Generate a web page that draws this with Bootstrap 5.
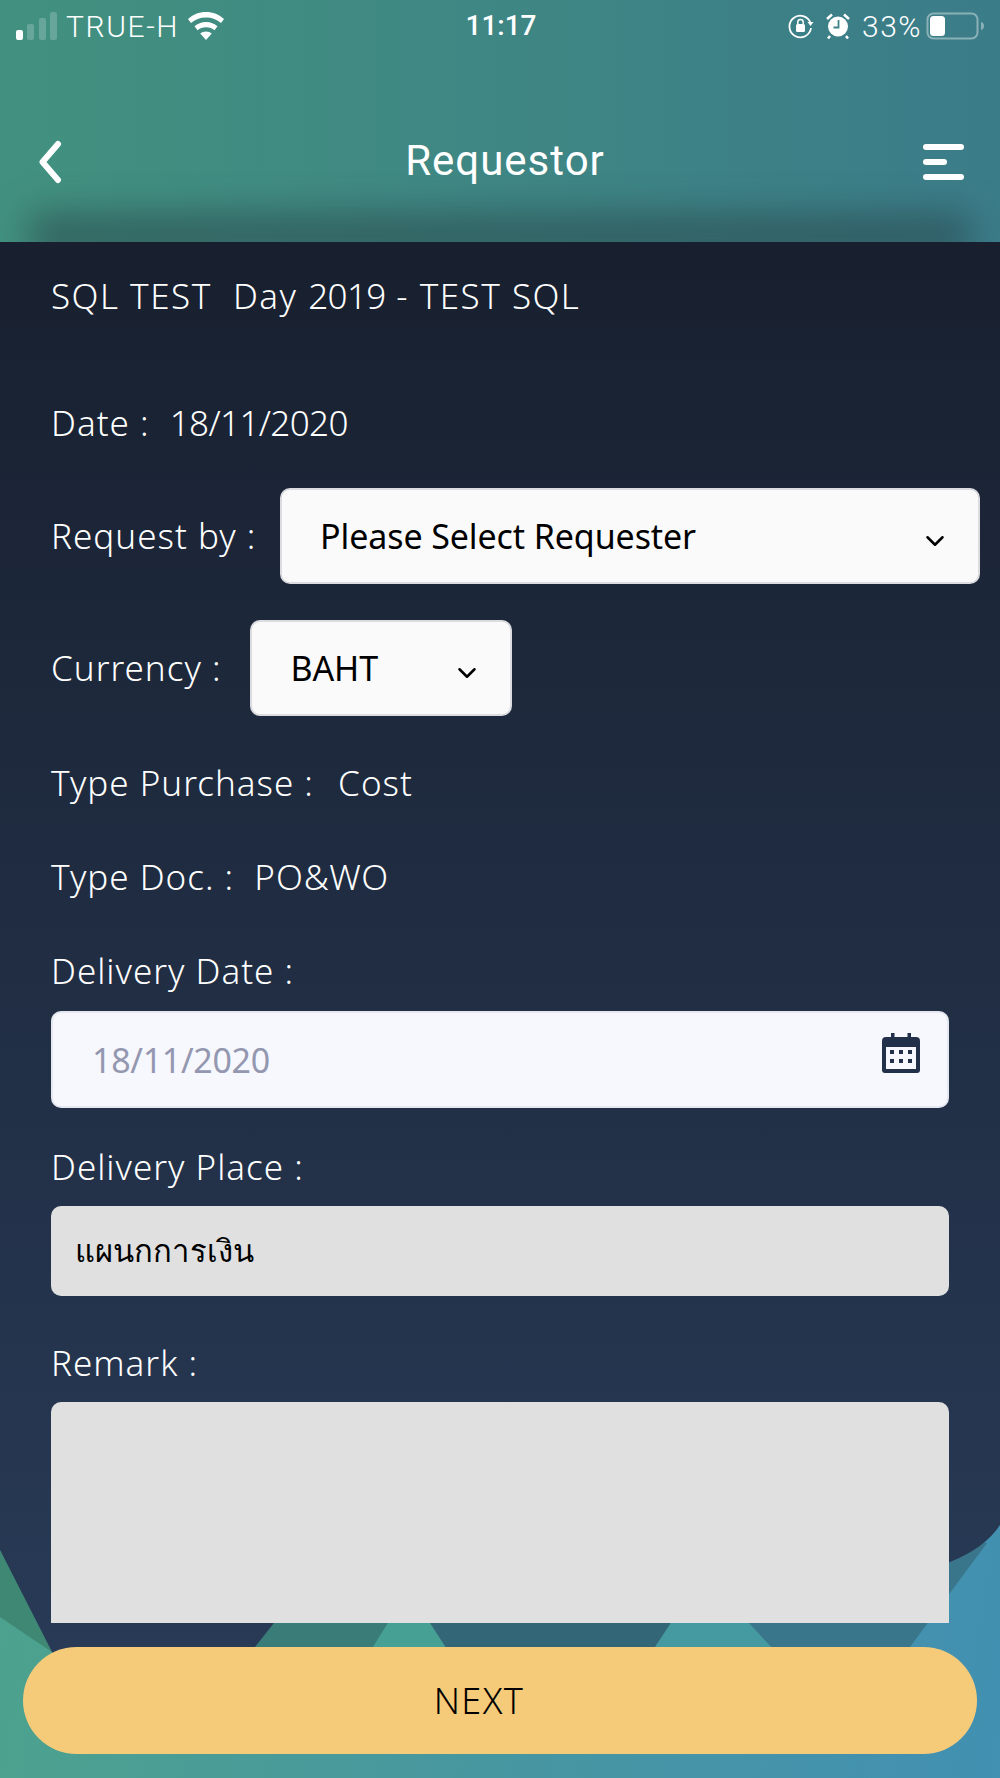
<!DOCTYPE html>
<html lang="en">
<head>
    <meta charset="UTF-8">
    <title>Requestor</title>
    <link href="https://cdn.jsdelivr.net/npm/bootstrap@5.3.0/dist/css/bootstrap.min.css" rel="stylesheet">
    <style>
      body { font-family: "Noto Sans", "Open Sans", sans-serif; background: #283a56; }
      .app-shell { position: relative; width: 1000px; height: 1778px; overflow: hidden; background: linear-gradient(100deg, #4fa883 0%, #4797a0 60%, #4290b2 100%); color: #fff; }
      .bg-shapes { position: absolute; left: 0; top: 0; width: 1000px; height: 1778px; }
      .top-head { position: relative; height: 242px; overflow: hidden; background: linear-gradient(90deg, #42917f 0%, #3b7c89 100%); }
      .top-head::after { content: ""; position: absolute; left: 30px; right: 30px; bottom: -16px; height: 44px; background: rgba(40,70,75,.62); filter: blur(18px); }
      .status-row { height: 52px; padding: 0 14px 0 16px; font-size: 30px; font-family: Roboto, sans-serif; font-weight: 300; }
      .status-left, .status-right { width: 380px; }
      .carrier-name { letter-spacing: 1.6px; }
      .batt-pct { letter-spacing: 1.5px; margin-left: 12px; }
      .alarm-mark { margin-left: 12px; }
      .status-time { font-weight: 500; font-size: 28px; }
      .title-row { height: 108px; padding: 0 36px 0 38px; margin-top: 54px; }
      .title-end-left { width: 200px; padding-top: 3px; }
      .title-end-right { width: 192px; padding-top: 3px; }
      .head-title { font-family: Roboto, sans-serif; font-size: 42px; letter-spacing: 1px; }
      .form-scroll { position: relative; height: 1381px; overflow: hidden; padding: 0 51px; font-size: 35px; letter-spacing: 1px; font-weight: 300; }
      .line-row { line-height: 44px; }
      .event-line { margin-top: 32px; letter-spacing: 1.5px; }
      .date-line { margin-top: 83px; margin-bottom: 43px; }
      .num-run { letter-spacing: -.6px; }
      .pick-line-first { margin-bottom: 36px; }
      .gap-type { margin-top: 50px; }
      .gap-first { margin-top: 45px; }
      .gap-label { margin-bottom: 17px; }
      .gap-label-date { margin-bottom: 18px; }
      .gap-place { margin-top: 37px; }
      .gap-remark { margin-top: 45px; }
      .pick-box.form-select { height: 96px; font-size: 34px; letter-spacing: -.1px; color: #000; font-weight: 400; background-color: #fafafa; border: 2px solid #dcdce0; border-radius: 10px; padding: 0 60px 0 38px; background-size: 26px 20px; background-position: right 30px top 41px; background-image: url("data:image/svg+xml,%3csvg xmlns='http://www.w3.org/2000/svg' viewBox='0 0 16 16'%3e%3cpath fill='none' stroke='%23000' stroke-linecap='round' stroke-linejoin='round' stroke-width='2' d='m2 5 6 6 6-6'/%3e%3c/svg%3e"); }
      .pick-requester { width: 700px; margin-left: auto; margin-right: -31px; flex: none; }
      .pick-currency { width: 262px; margin-left: 29px; }
      .field-box.form-control { border-radius: 10px; }
      .date-box.form-control { height: 97px; font-size: 34px; letter-spacing: -.3px; background: #f7f8fd; border: 2px solid #e6e8f1; padding-left: 39px; color: #9497b0; }
      .cal-mark { position: absolute; right: 29px; top: 21px; }
      .place-box.form-control { height: 90px; background: #e0e0e0; border: 0; padding-left: 24px; color: #000; font-size: 31px; letter-spacing: .1px; font-family: "Noto Sans", "DejaVu Sans", sans-serif; opacity: 1; }
      .note-box.form-control { height: 300px; background: #e0e0e0; border: 0; resize: none; }
      .next-wrap { position: relative; padding: 24px 23px 0; }
      .next-btn.btn { width: 100%; height: 107px; background: #f5cb7a; border: 0; border-radius: 54px; color: #000; font-size: 36px; letter-spacing: 1.4px; font-weight: 300; font-family: "Noto Sans", sans-serif; padding-right: 54px; }
    </style>
</head>
<body class="m-0">
    <div class="app-shell">
        <svg class="bg-shapes" viewBox="0 0 1000 1778" aria-hidden="true">
            <defs>
                <linearGradient id="panelFill" x1="0" y1="242" x2="0" y2="1650" gradientUnits="userSpaceOnUse">
                    <stop offset="0" stop-color="#18202f"/>
                    <stop offset="1" stop-color="#283a56"/>
                </linearGradient>
            </defs>
            <path fill="#3e8874" d="M0 1550 L52 1652 L0 1617 Z"/>
            <path fill="#3a7d78" d="M274 1623 L388 1623 L340 1700 L200 1700 Z"/>
            <path fill="#47a094" d="M388 1623 L430 1623 L480 1700 L340 1700 Z"/>
            <path fill="#336778" d="M430 1623 L671 1623 L620 1700 L480 1700 Z"/>
            <path fill="#4599a0" d="M671 1623 L749 1623 L820 1700 L620 1700 Z"/>
            <path fill="#39768c" d="M749 1623 L749 1500 L987 1543 L910 1647 L870 1700 L820 1700 Z"/>
            <path fill="url(#panelFill)" d="M0 242 H1000 V1525 Q985 1548 950 1562 L800 1600 L274 1623 L255 1647 L60 1680 L52 1652 L0 1550 Z"/>
        </svg>
        <header class="top-head">
            <div class="status-row d-flex align-items-center justify-content-between">
                <div class="status-left d-flex align-items-center">
                    <svg width="42" height="28" viewBox="0 0 42 28"><rect x="0" y="18" width="7" height="10" rx="2" fill="#fff"/><rect x="11" y="12" width="7" height="16" rx="2" fill="#fff" fill-opacity=".2"/><rect x="23" y="6" width="7" height="22" rx="2" fill="#fff" fill-opacity=".2"/><rect x="34" y="0" width="7" height="28" rx="2" fill="#fff" fill-opacity=".2"/></svg>
                    <span class="ms-2 carrier-name">TRUE-H</span>
                    <svg class="ms-2" width="38" height="28" viewBox="0 0 38 28"><path d="M19 0C12 0 6 2.500 1 7l3 4c4-3.500 9-5.500 15-5.500S30 7.500 34 11l3-4C32 2.500 26 0 19 0zM19 10c-4.500 0-8.500 1.600-11.500 4.300l3 3.900c2.200-1.900 5.200-3 8.500-3s6.300 1.100 8.500 3l3-3.900C27.500 11.600 23.500 10 19 10zM19 19.500c-2.300 0-4.300.8-5.800 2.100L19 28l5.800-6.400c-1.500-1.300-3.500-2.100-5.800-2.100z" fill="#fff"/></svg>
                </div>
                <div class="status-time">11:17</div>
                <div class="status-right d-flex align-items-center justify-content-end">
                    <svg width="26" height="26" viewBox="0 0 26 26" fill="none"><path d="M23 15a10.800 10.800 0 1 1-.5-5" stroke="#fff" stroke-width="1.800"/><path d="M19.500 9h6l-3 4z" fill="#fff"/><rect x="8" y="11" width="9" height="8" rx="1.500" fill="#fff"/><path d="M9.800 11V9.300a2.700 2.700 0 0 1 5.400 0V11" stroke="#fff" stroke-width="1.500"/></svg>
                    <svg class="alarm-mark" width="24" height="26" viewBox="0 0 24 26"><circle cx="12" cy="13.500" r="10" fill="#fff"/><path d="M12.500 7v7.500H7.500" fill="none" stroke="#3f8388" stroke-width="1.800"/><path d="M1 6l5-4.500M23 6l-5-4.500M4 23l-2 2.500M20 23l2 2.500" stroke="#fff" stroke-width="2.500"/></svg>
                    <span class="batt-pct">33%</span>
                    <svg class="ms-1" width="60" height="28" viewBox="0 0 60 28"><rect x="1.500" y="1.500" width="50" height="25" rx="6" fill="none" stroke="#fff" stroke-opacity=".4" stroke-width="2"/><rect x="4" y="4" width="15" height="20" rx="3.500" fill="#fff"/><path d="M55 10c2 .5 3 2 3 4s-1 3.500-3 4z" fill="#fff" fill-opacity=".4"/></svg>
                </div>
            </div>
            <div class="title-row d-flex align-items-center">
                <div class="title-end-left"><svg class="d-block" width="24" height="44" viewBox="0 0 24 44"><path d="M20 4 4.500 22 20 40" fill="none" stroke="#fff" stroke-width="6" stroke-linecap="round" stroke-linejoin="round"/></svg></div>
                <div class="head-title flex-grow-1 text-center">Requestor</div>
                <div class="title-end-right d-flex justify-content-end"><svg class="d-block" width="41" height="38" viewBox="0 0 41 38"><rect x="0" y="1" width="41" height="6" rx="3" fill="#fff"/><rect x="0" y="16" width="24" height="6" rx="3" fill="#fff"/><rect x="0" y="31" width="41" height="6" rx="3" fill="#fff"/></svg></div>
            </div>
        </header>
        <main class="form-scroll">
            <div class="line-row event-line">SQL TEST&nbsp; Day <span class="num-run">2019</span> - TEST SQL</div>
            <div class="line-row date-line">Date :&nbsp; <span class="num-run">18/11/2020</span></div>
            <div class="d-flex align-items-center line-row pick-line-first">
                <span class="text-nowrap">Request by :</span>
                <select class="form-select pick-box pick-requester"><option>Please Select Requester</option></select>
            </div>
            <div class="d-flex align-items-center line-row">
                <span class="text-nowrap">Currency :</span>
                <select class="form-select pick-box pick-currency"><option>BAHT</option></select>
            </div>
            <div class="line-row gap-first">Type Purchase :&nbsp; <span class="ms-1">Cost</span></div>
            <div class="line-row gap-type">Type Doc. :&nbsp; PO&amp;WO</div>
            <div class="line-row gap-type gap-label-date">Delivery Date :</div>
            <div class="position-relative">
                <input class="form-control field-box date-box" type="text" value="18/11/2020">
                <svg class="cal-mark" width="38" height="42" viewBox="0 0 38 42"><path d="M4 5h5V1h3.500v4h13V1H29v4h5a4 4 0 0 1 4 4v29a3 3 0 0 1-3 3H3a3 3 0 0 1-3-3V9a4 4 0 0 1 4-4z" fill="#23304a"/><rect x="4" y="15" width="30" height="22" fill="#f7f8fd"/><g fill="#23304a"><rect x="8" y="18" width="4" height="4"/><rect x="17" y="18" width="4" height="4"/><rect x="26" y="18" width="4" height="4"/><rect x="8" y="27" width="4" height="4"/><rect x="17" y="27" width="4" height="4"/><rect x="26" y="27" width="4" height="4"/></g></svg>
            </div>
            <div class="line-row gap-place gap-label">Delivery Place :</div>
            <input class="form-control field-box place-box" type="text" value="แผนกการเงิน" readonly>
            <div class="line-row gap-remark gap-label">Remark :</div>
            <textarea class="form-control field-box note-box" readonly></textarea>
        </main>
        <div class="next-wrap">
            <button class="btn next-btn" type="button">NEXT</button>
        </div>
    </div>
    <script src="https://cdn.jsdelivr.net/npm/bootstrap@5.3.0/dist/js/bootstrap.bundle.min.js"></script>
</body>
</html>
